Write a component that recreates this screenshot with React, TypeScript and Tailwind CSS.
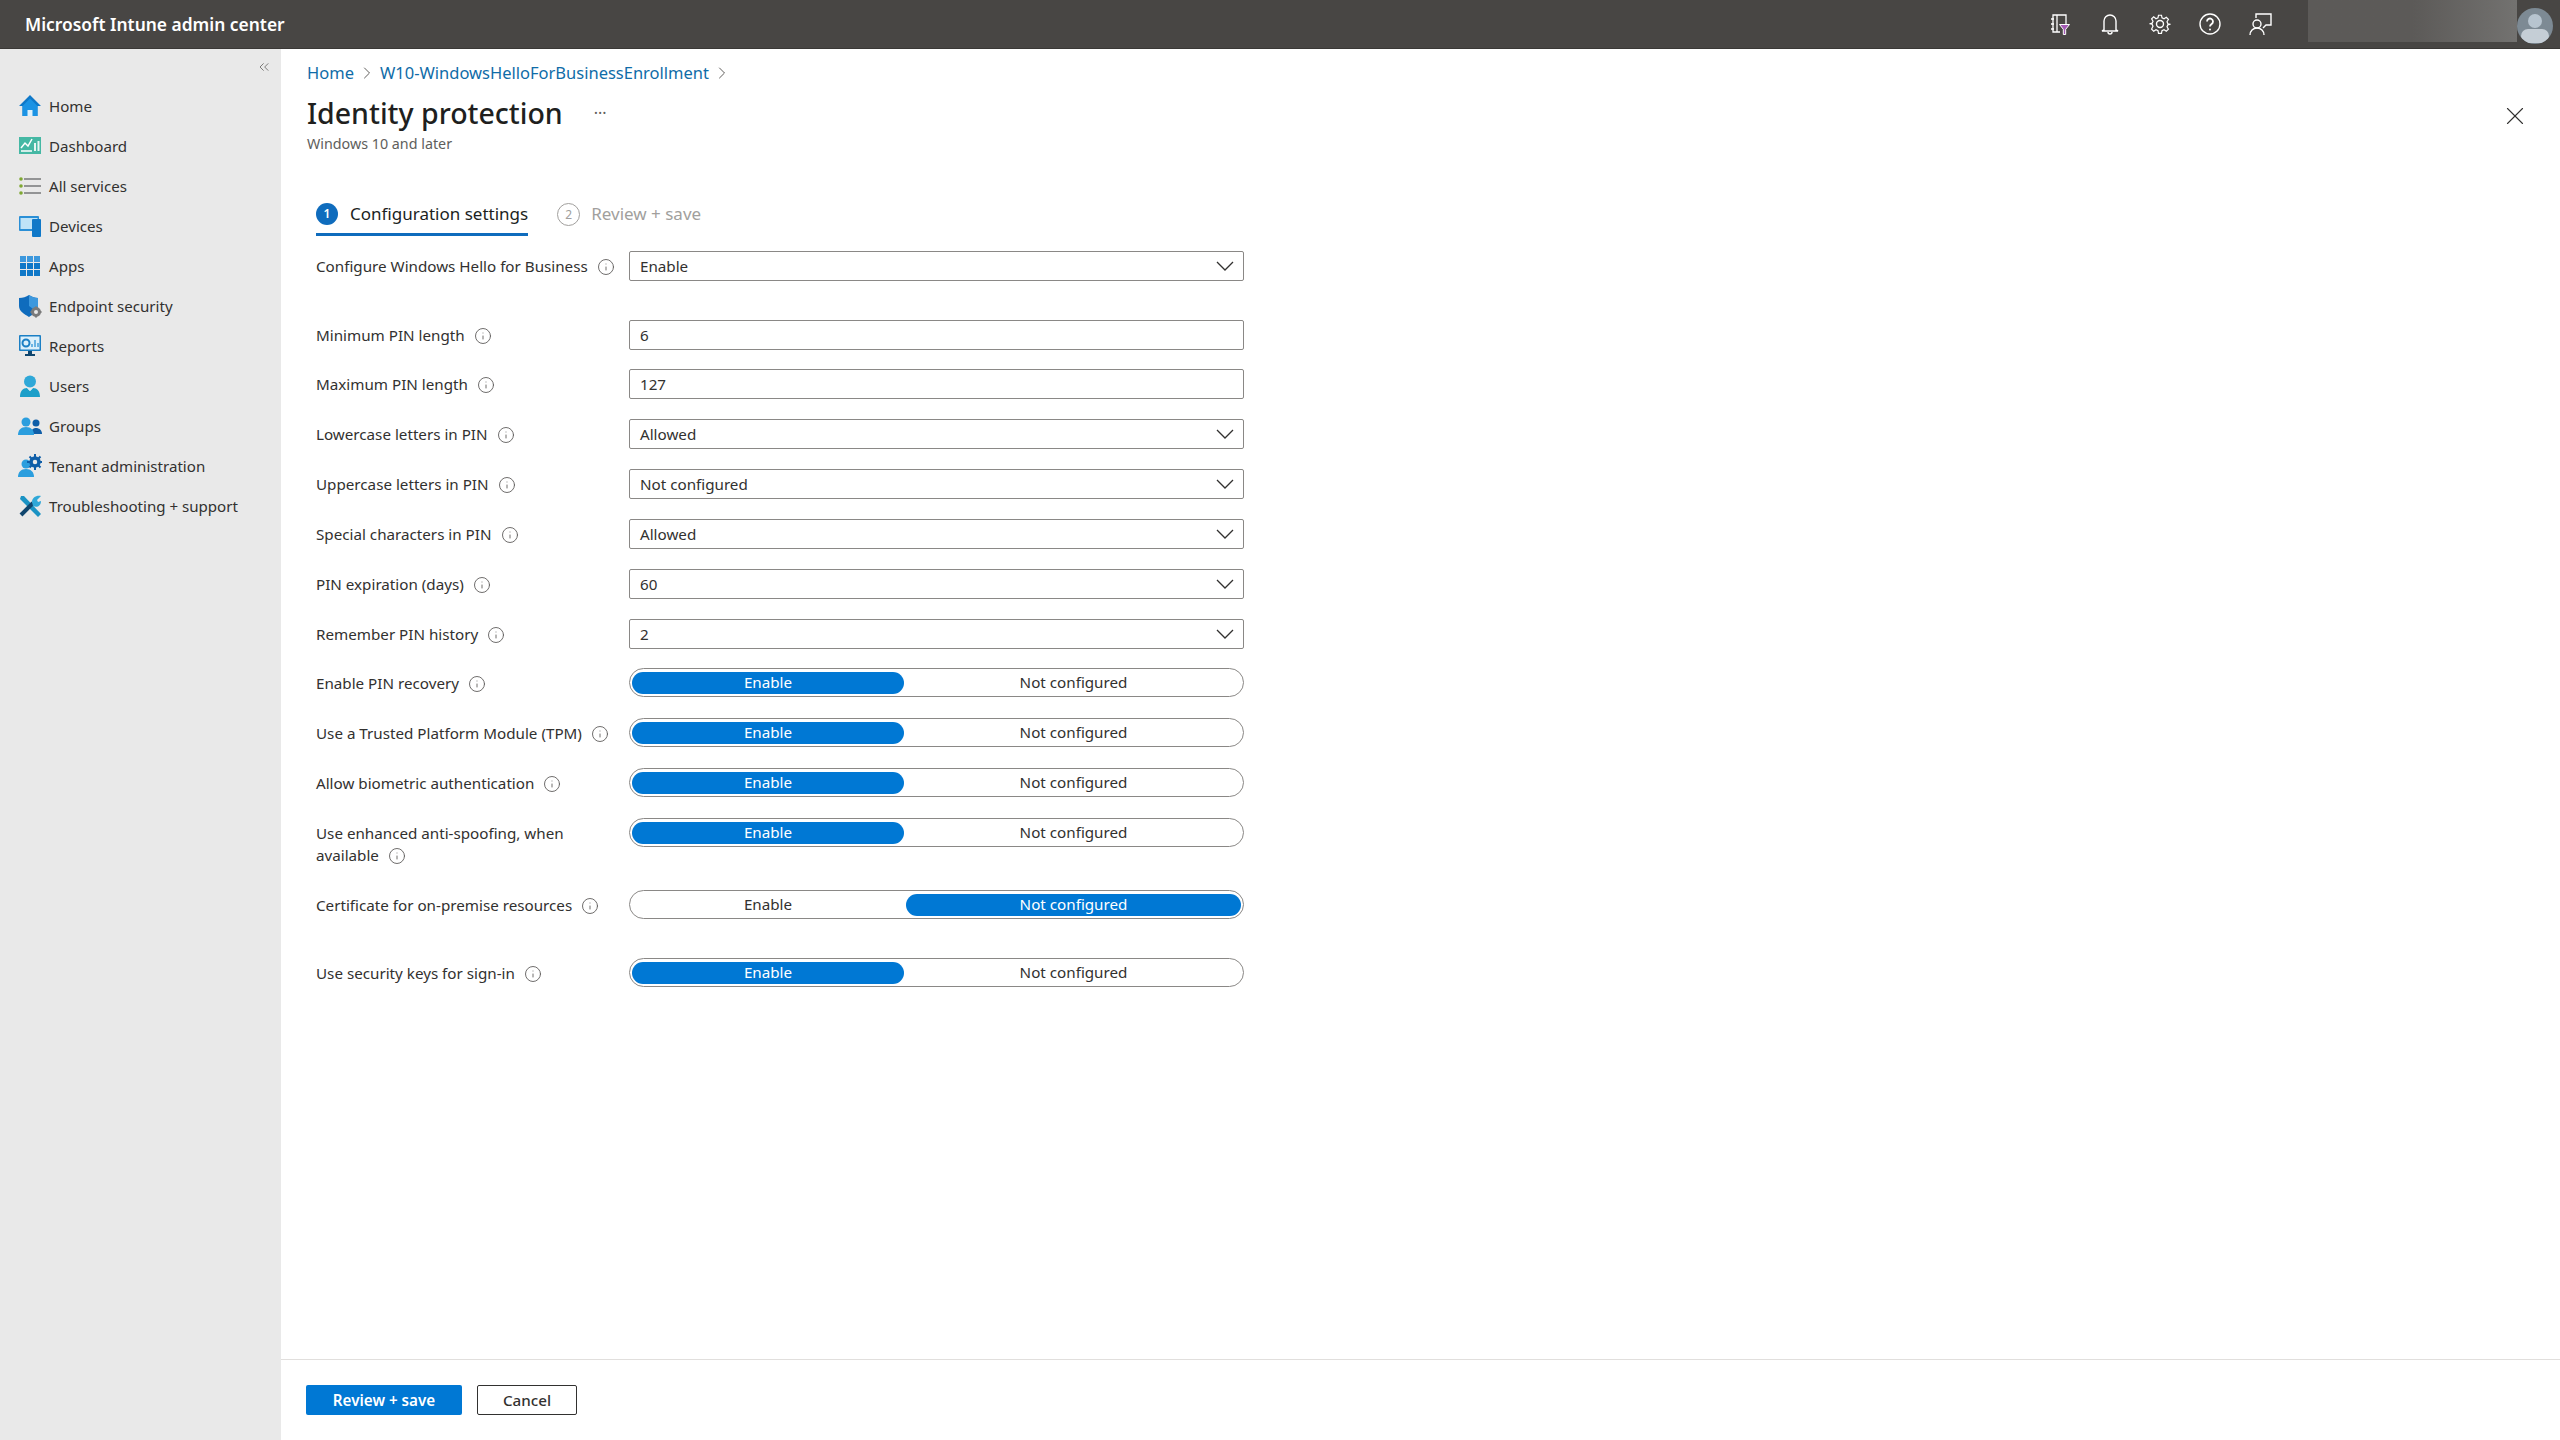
import { ChevronRight, ChevronsLeft, Info, X } from 'lucide-react';

const font = "font-['Noto_Sans','Open_Sans',sans-serif]";

function HomeIcon() {
  return (
    <svg viewBox="0 0 24 24" className="h-[24px] w-[24px]">
      <path d="M12 1 1 12h3.500v10h15V12H23z" fill="#0f78c8" />
      <path d="M4.500 12 12 4.500l7.500 7.500v10h-15z" fill="#1b93e4" />
      <path d="M9.500 22v-6h5v6z" fill="#dff0fb" />
    </svg>
  );
}

function DashboardIcon() {
  return (
    <svg viewBox="0 0 24 24" className="h-[24px] w-[24px]">
      <rect x="1" y="3" width="22" height="17" fill="#45b8a4" />
      <path d="M3 14l4-5 3 3 4-7" fill="none" stroke="#fff" strokeWidth="1.500" />
      <path d="M3 17h11" stroke="#fff" strokeWidth="1.500" />
      <path d="M17 9v8M20.500 7v10" stroke="#e8f6f3" strokeWidth="2" />
    </svg>
  );
}

function ServicesIcon() {
  return (
    <svg viewBox="0 0 24 24" className="h-[24px] w-[24px]">
      <path d="M6 5h17M6 12h17M6 19h17" stroke="#77787a" strokeWidth="1.500" />
      <circle cx="3" cy="5" r="1.800" fill="#7fa832" />
      <circle cx="3" cy="12" r="1.800" fill="#7fa832" />
      <circle cx="3" cy="19" r="1.800" fill="#7fa832" />
    </svg>
  );
}

function DevicesIcon() {
  return (
    <svg viewBox="0 0 24 24" className="h-[24px] w-[24px]">
      <rect x="1" y="2" width="20" height="15" rx="1" fill="#2a8fd6" />
      <rect x="2.500" y="4" width="17" height="11" fill="#bfe3f7" />
      <rect x="14" y="5" width="9" height="18" rx="1" fill="#0f78c8" />
    </svg>
  );
}

function AppsIcon() {
  return (
    <svg viewBox="0 0 24 24" className="h-[24px] w-[24px]">
      <g fill="#0f78c8">
        <rect x="2" y="2" width="6" height="6" fill="#3d98dd" />
        <rect x="9" y="2" width="6" height="6" fill="#3d98dd" />
        <rect x="16" y="2" width="6" height="6" fill="#3d98dd" />
        <rect x="2" y="9" width="6" height="6" />
        <rect x="9" y="9" width="6" height="6" />
        <rect x="16" y="9" width="6" height="6" />
        <rect x="2" y="16" width="6" height="6" />
        <rect x="9" y="16" width="6" height="6" />
        <rect x="16" y="16" width="6" height="6" />
      </g>
    </svg>
  );
}

function ShieldIcon() {
  return (
    <svg viewBox="0 0 24 24" className="h-[24px] w-[24px]">
      <path d="M11 1c3 2 6 3 9 3v8c0 5-4 8-9 11C6 20 1 17 1 12V4c4 0 7-1 10-3z" fill="#0f6cbd" />
      <path d="M11 1c3 2 6 3 9 3v8c0 2-1 4-2 5L11 12z" fill="#3d98dd" />
      <circle cx="18" cy="18" r="3.500" fill="#e9e9e9" stroke="#7b7b7b" strokeWidth="3" />
      <path d="M18 12.500v2M18 21.500v2M12.500 18h2M21.500 18h2" stroke="#7b7b7b" strokeWidth="2" />
    </svg>
  );
}

function ReportsIcon() {
  return (
    <svg viewBox="0 0 24 24" className="h-[24px] w-[24px]">
      <rect x="1" y="1" width="22" height="16" rx="1" fill="#1b7fc4" />
      <rect x="2.500" y="2.500" width="19" height="13" fill="#dcf0fb" />
      <circle cx="8" cy="9" r="3.500" fill="none" stroke="#1b7fc4" strokeWidth="2" />
      <path d="M14 13v-3M17 13V6M20 13V9" stroke="#45a0dc" strokeWidth="1.500" />
      <path d="M10 17h4v3h3v2H7v-2h3z" fill="#10466e" />
    </svg>
  );
}

function UserIcon() {
  return (
    <svg viewBox="0 0 24 24" className="h-[24px] w-[24px]">
      <circle cx="12" cy="7.500" r="6" fill="#2fa8d8" />
      <path d="M2 23c0-6 3-9 7-9l3 3 3-3c4 0 7 3 7 9z" fill="#1c9fc9" />
      <path d="M9 14l3 3 3-3-3 1z" fill="#d7eef7" />
    </svg>
  );
}

function GroupsIcon() {
  return (
    <svg viewBox="0 0 24 24" className="h-[24px] w-[24px]">
      <circle cx="18" cy="9" r="3.500" fill="#0f5ea8" />
      <path d="M13 20c0-4 2-6 5-6s6 2 6 6z" fill="#0f5ea8" />
      <circle cx="8" cy="8" r="4.500" fill="#2b9ede" />
      <path d="M0 21c0-5 3-8 8-8s8 3 8 8z" fill="#2b9ede" />
    </svg>
  );
}

function TenantIcon() {
  return (
    <svg viewBox="0 0 24 24" className="h-[24px] w-[24px]">
      <circle cx="8" cy="10" r="4.500" fill="#2b9ede" />
      <path d="M0 23c0-5 3-8 8-8s8 3 8 8z" fill="#2b9ede" />
      <circle cx="17" cy="8" r="4" fill="#e9e9e9" stroke="#0f5ea8" strokeWidth="3.500" />
      <path d="M17 0v3M17 13v3M9 8h3M22 8h2M11.500 2.500l2 2M20.500 11.500l2 2M11.500 13.500l2-2M20.500 4.500l2-2" stroke="#0f5ea8" strokeWidth="2" />
    </svg>
  );
}

function ToolsIcon() {
  return (
    <svg viewBox="0 0 24 24" className="h-[24px] w-[24px]">
      <path d="M3 2l3 0 17 18-3 3L2 5z" fill="#1b93c4" />
      <path d="M3 21 15 9" stroke="#10466e" strokeWidth="4" />
      <path d="M14 8c0-4 4-7 9-6l-4 4 1 2 3-1c0 5-4 7-8 5z" fill="#2fa8d8" />
    </svg>
  );
}

const navItems = [
  { label: 'Home', icon: HomeIcon },
  { label: 'Dashboard', icon: DashboardIcon },
  { label: 'All services', icon: ServicesIcon },
  { label: 'Devices', icon: DevicesIcon },
  { label: 'Apps', icon: AppsIcon },
  { label: 'Endpoint security', icon: ShieldIcon },
  { label: 'Reports', icon: ReportsIcon },
  { label: 'Users', icon: UserIcon },
  { label: 'Groups', icon: GroupsIcon },
  { label: 'Tenant administration', icon: TenantIcon },
  { label: 'Troubleshooting + support', icon: ToolsIcon },
];

function Label({ text, wrap }: { text: string; wrap?: string }) {
  return (
    <div className="w-[313px] shrink-0 pt-[4px] text-[15.2px] leading-[22px] text-[#323130]">
      {text}
      {wrap && <br />}
      {wrap}
      <Info className="ml-[9px] inline h-[18px] w-[18px] align-[-4px] text-[#605e5c]" strokeWidth={1.2} />
    </div>
  );
}

function Select({ value }: { value: string }) {
  return (
    <div className="flex h-[30px] w-[615px] items-center justify-between rounded-[2px] border border-[#8a8886] pl-[10px] pr-[9px] text-[15.2px] text-[#323130]">
      <span>{value}</span>
      <svg viewBox="0 0 18 10" className="h-[10px] w-[18px]" fill="none" stroke="#323130" strokeWidth="1.300">
        <path d="M1 1l8 8 8-8" />
      </svg>
    </div>
  );
}

function TextBox({ value }: { value: string }) {
  return (
    <div className="flex h-[30px] w-[615px] items-center rounded-[2px] border border-[#8a8886] px-[10px] text-[15.2px] text-[#323130]">
      {value}
    </div>
  );
}

function Toggle({ on }: { on: boolean }) {
  return (
    <div className="flex h-[29px] w-[615px] items-center gap-[2px] rounded-full border border-[#8a8886] px-[2px] text-[15.2px]">
      <div className={`flex h-[22px] w-[272px] items-center justify-center rounded-full ${on ? 'bg-[#0078d4] text-white' : 'text-[#323130]'}`}>Enable</div>
      <div className={`flex h-[22px] flex-1 items-center justify-center rounded-full ${on ? 'text-[#323130]' : 'bg-[#0078d4] text-white'}`}>Not configured</div>
    </div>
  );
}

export default function App() {
  return (
    <div className={`flex h-[1440px] w-[2560px] flex-col overflow-hidden bg-white ${font}`}>
      <header className="flex h-[49px] shrink-0 items-center border-b border-[#3a3836] bg-[#484644] pl-[25px] text-white">
        <span className="text-[17.4px] font-semibold">Microsoft Intune admin center</span>
        <div className="ml-auto flex h-full items-center">
          <svg viewBox="0 0 24 24" className="h-[24px] w-[24px]" fill="none" stroke="#fff" strokeWidth="1.300">
            <path d="M12 20H5V3h13v9M9 3v17M3 7h3M3 12h3M3 17h3" />
            <path d="M11.500 12.500h10l-3.800 4.800v5.200h-2.400v-5.200z" fill="#a45ab5" stroke="#fff" strokeWidth="1" />
          </svg>
          <svg viewBox="0 0 24 24" className="ml-[26px] h-[24px] w-[24px]" fill="none" stroke="#fff" strokeWidth="1.400">
            <path d="M6 18V9a6 6 0 0 1 12 0v9l2 1H4zM10 20a2 2 0 0 0 4 0" />
          </svg>
          <svg viewBox="0 0 24 24" className="ml-[26px] h-[24px] w-[24px]" fill="none" stroke="#fff" strokeWidth="1.400">
            <circle cx="12" cy="12" r="3.500" />
            <path d="M10.300 2h3.400l.6 3 2.300 1 2.600-1.600 2.400 2.400L20 9.400l1 2.300 3 .6-3 .6-1 2.300 1.600 2.600-2.400 2.400-2.600-1.600-2.300 1-.6 3h-3.400l-.6-3-2.300-1-2.600 1.600-2.400-2.400L4 14.600l-1-2.300-3-.6 3-.6 1-2.300-1.600-2.600 2.400-2.400L7.400 6l2.300-1z" transform="translate(1.500 1.500) scale(.875)" />
          </svg>
          <svg viewBox="0 0 24 24" className="ml-[26px] h-[24px] w-[24px]" fill="none" stroke="#fff" strokeWidth="1.400">
            <circle cx="12" cy="12" r="10" />
            <path d="M9 9.500a3 3 0 1 1 4.500 2.600c-1 .6-1.500 1.200-1.500 2.400" strokeWidth="1.800" />
            <circle cx="12" cy="17.500" r="1" fill="#fff" stroke="none" />
          </svg>
          <svg viewBox="0 0 24 24" className="ml-[26px] h-[24px] w-[24px]" fill="none" stroke="#fff" strokeWidth="1.400">
            <circle cx="9" cy="12" r="4" />
            <path d="M2 23c0-4 3-7 7-7s7 3 7 7M8 6V2h15v11h-5l-3 3" />
          </svg>
          <div className="ml-[36px] flex h-full items-start">
            <div className="h-[42px] w-[209px] bg-gradient-to-r from-[#5c5a58] via-[#5c5a58] to-[#737270]" />
            <div className="relative mr-[7px] mt-[8px] h-[36px] w-[36px] overflow-hidden rounded-full bg-[#7d8a94]">
              <div className="mx-auto mt-[6px] h-[14px] w-[14px] rounded-full bg-[#b7c4cf]" />
              <div className="mx-auto mt-[1px] h-[14px] w-[28px] rounded-full bg-[#c5ced6]" />
            </div>
          </div>
        </div>
      </header>

      <div className="flex min-h-0 flex-1">
        <aside className="w-[281px] shrink-0 bg-[#e9e9e9]">
          <div className="flex h-[38px] items-start justify-end pr-[9px] pt-[10px]">
            <ChevronsLeft className="h-[16px] w-[16px] text-[#605e5c]" strokeWidth={1.2} />
          </div>
          <nav className="mt-[-1px]">
            {navItems.map((item) => (
              <div key={item.label} className="flex h-[40px] items-center pl-[18px] text-[15.1px] text-[#323130]">
                <item.icon />
                <span className="ml-[7px]">{item.label}</span>
              </div>
            ))}
          </nav>
        </aside>

        <main className="flex min-w-0 flex-1 flex-col">
          <div className="relative flex-1 pl-[26px] pt-[11px]">
            <div className="flex items-center text-[16.5px] leading-[26px] text-[#0f6ca8]">
              <span>Home</span>
              <ChevronRight className="mx-[3px] h-[20px] w-[20px] text-[#605e5c]" strokeWidth={1.2} />
              <span>W10-WindowsHelloForBusinessEnrollment</span>
              <ChevronRight className="mx-[3px] h-[20px] w-[20px] text-[#605e5c]" strokeWidth={1.2} />
            </div>
            <div className="mt-[7px] flex items-center">
              <h1 className="text-[28.5px] font-medium leading-[40px] text-[#201f1e]">Identity protection</h1>
              <span className="ml-[31px] text-[16px] leading-[16px] text-[#605e5c]">···</span>
            </div>
            <div className="mt-[1px] text-[14.3px] leading-[20px] text-[#605e5c]">Windows 10 and later</div>
            <X className="absolute right-[30px] top-[52px] h-[30px] w-[30px] text-[#323130]" strokeWidth={0.9} />

            <div className="ml-[9px] mt-[49px] flex items-start text-[17px]">
              <div className="flex h-[33px] items-start border-b-[3px] border-[#0f6cbd]">
                <span className="flex h-[22px] w-[22px] items-center justify-center rounded-full bg-[#0f6cbd] text-[12px] font-semibold text-white">1</span>
                <span className="ml-[12px] leading-[22px] text-[#201f1e]">Configuration settings</span>
              </div>
              <div className="ml-[29px] flex items-start text-[#a19f9d]">
                <span className="flex h-[23px] w-[23px] items-center justify-center rounded-full border border-[#a19f9d] text-[12px]">2</span>
                <span className="ml-[11px] leading-[22px]">Review + save</span>
              </div>
            </div>

            <div className="ml-[9px] mt-[15px]">
              <div className="flex h-[69px]"><Label text="Configure Windows Hello for Business" /><Select value="Enable" /></div>
              <div className="flex h-[49px]"><Label text="Minimum PIN length" /><TextBox value="6" /></div>
              <div className="flex h-[50px]"><Label text="Maximum PIN length" /><TextBox value="127" /></div>
              <div className="flex h-[50px]"><Label text="Lowercase letters in PIN" /><Select value="Allowed" /></div>
              <div className="flex h-[50px]"><Label text="Uppercase letters in PIN" /><Select value="Not configured" /></div>
              <div className="flex h-[50px]"><Label text="Special characters in PIN" /><Select value="Allowed" /></div>
              <div className="flex h-[50px]"><Label text="PIN expiration (days)" /><Select value="60" /></div>
              <div className="flex h-[49px]"><Label text="Remember PIN history" /><Select value="2" /></div>
              <div className="flex h-[50px]"><Label text="Enable PIN recovery" /><Toggle on /></div>
              <div className="flex h-[50px]"><Label text="Use a Trusted Platform Module (TPM)" /><Toggle on /></div>
              <div className="flex h-[50px]"><Label text="Allow biometric authentication" /><Toggle on /></div>
              <div className="flex h-[72px]"><Label text="Use enhanced anti-spoofing, when" wrap="available" /><Toggle on /></div>
              <div className="flex h-[68px]"><Label text="Certificate for on-premise resources" /><Toggle on={false} /></div>
              <div className="flex h-[50px]"><Label text="Use security keys for sign-in" /><Toggle on /></div>
            </div>
          </div>

          <footer className="flex h-[81px] shrink-0 items-start gap-[15px] border-t border-[#e1dfdd] pl-[25px] pt-[25px] text-[15.2px]">
            <button className="h-[30px] w-[156px] rounded-[2px] bg-[#0078d4] font-semibold text-white">Review + save</button>
            <button className="h-[30px] w-[100px] rounded-[2px] border border-[#323130] font-medium text-[#323130]">Cancel</button>
          </footer>
        </main>
      </div>
    </div>
  );
}
